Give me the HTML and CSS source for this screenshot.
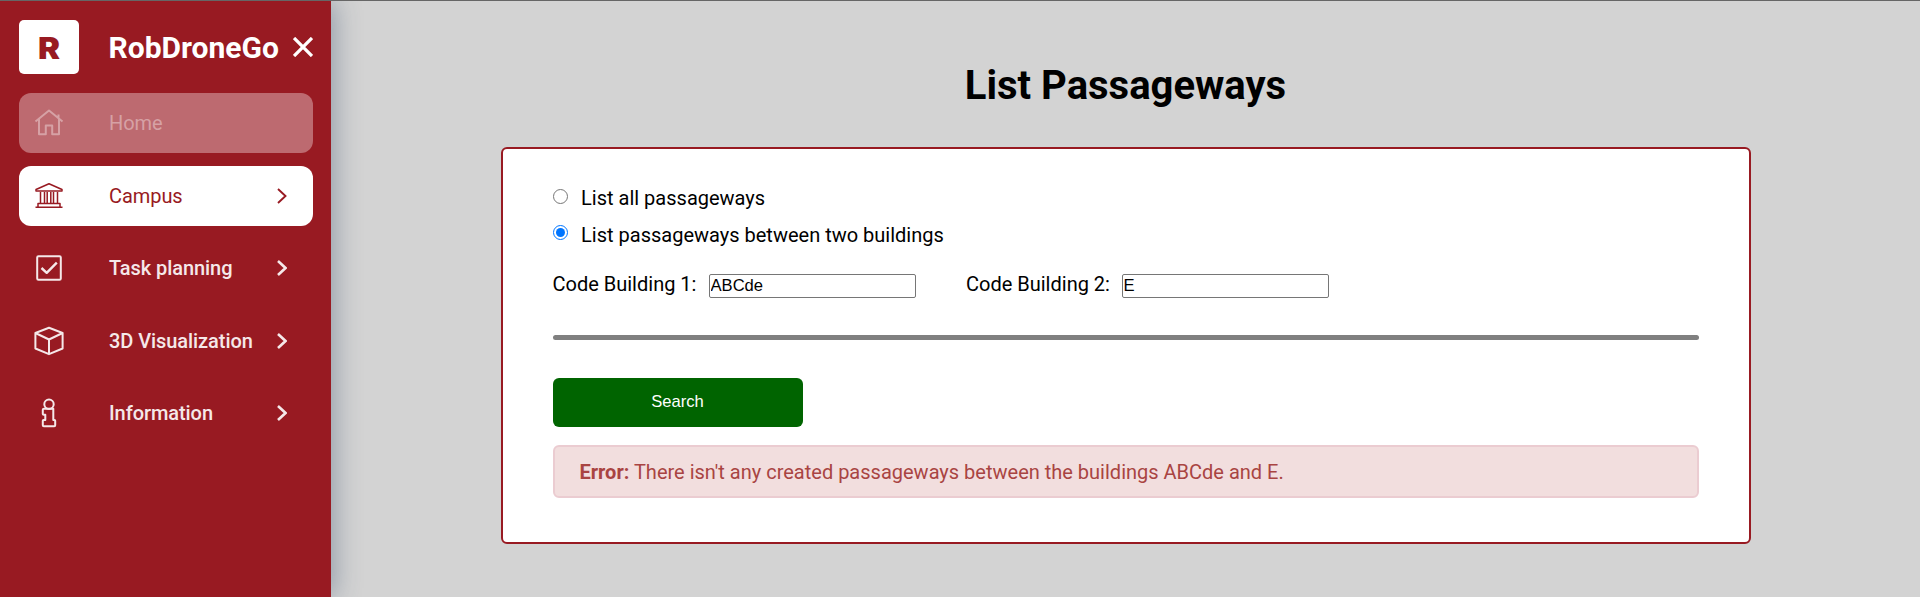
FILE: index.html
```html
<!DOCTYPE html>
<html lang="en">
<head>
<meta charset="utf-8">
<title>RobDroneGo</title>
<link rel="stylesheet" href="styles.css">
</head>
<body>
<div class="app">
  <aside class="sidebar">
    <header class="brand">
      <span class="logo"><span class="logo-letter">R</span></span>
      <span class="brand-name">RobDroneGo</span>
      <svg class="close" viewBox="0 0 20 20"><path d="M1 1 19 19M19 1 1 19"/></svg>
    </header>
    <nav class="menu">
      <a class="item disabled">
        <svg class="icon" viewBox="0 0 30 30"><path d="M1.5 13.5 15 2.5 28.5 13.5M5 11V26.2H11.8V17.5H18.2V26.2H25V11M24.5 10V6.5"/></svg>
        <span class="label">Home</span>
      </a>
      <a class="item active">
        <svg class="icon" viewBox="0 0 30 30"><path d="M15 2.8 28 8.5V10H2V8.5ZM6.5 11V22M10.5 11V22M13.2 11V22M16.8 11V22M19.5 11V22M23.5 11V22M4 25.5V22.5H26V25.5M1.5 26.2H28.5"/></svg>
        <span class="label">Campus</span>
        <svg class="chevron" viewBox="0 0 10 16"><path d="M1 1 8.5 8 1 15"/></svg>
      </a>
      <a class="item">
        <svg class="icon" viewBox="0 0 30 30"><rect x="3.2" y="3.2" width="23.6" height="23.6" rx="1.3"/><path class="thick" d="M7.5 15 12.7 19.8 22.8 9.7"/></svg>
        <span class="label">Task planning</span>
        <svg class="chevron bold" viewBox="0 0 10 16"><path d="M1 1 8.5 8 1 15"/></svg>
      </a>
      <a class="item">
        <svg class="icon" viewBox="0 0 30 30"><path d="M15 1.8 28.6 7V22.5L15 28.2 1.4 22.5V7ZM1.4 7 15 13.5 28.6 7M15 13.5V28"/></svg>
        <span class="label">3D Visualization</span>
        <svg class="chevron bold" viewBox="0 0 10 16"><path d="M1 1 8.5 8 1 15"/></svg>
      </a>
      <a class="item">
        <svg class="icon" viewBox="0 0 30 30"><circle cx="15" cy="6.2" r="4.7"/><path d="M10 10.7H19.3V22H20.5Q21.2 22 21.2 22.8V27.3Q21.2 28.3 20.2 28.3H9.8Q8.8 28.3 8.8 27.3V22.8Q8.8 22 9.6 22H11.3V16.8H9.7Q8.8 16.8 8.8 16V11.7Q8.8 10.7 10 10.7Z"/></svg>
        <span class="label">Information</span>
        <svg class="chevron bold" viewBox="0 0 10 16"><path d="M1 1 8.5 8 1 15"/></svg>
      </a>
    </nav>
  </aside>
  <main class="content">
    <h1 class="title">List Passageways</h1>
    <section class="card">
      <label class="option"><input class="radio" type="radio" name="mode"><span>List all passageways</span></label>
      <label class="option"><input class="radio" type="radio" name="mode" checked><span>List passageways between two buildings</span></label>
      <div class="fields">
        <label class="field"><span>Code Building 1:</span><input class="text" type="text" value="ABCde"></label>
        <label class="field"><span>Code Building 2:</span><input class="text" type="text" value="E"></label>
      </div>
      <hr class="rule">
      <button class="search" type="button">Search</button>
      <div class="alert"><strong>Error:</strong> There isn't any created passageways between the buildings ABCde and E.</div>
    </section>
  </main>
</div>
</body>
</html>
```
FILE: styles.css
```css
* { box-sizing: border-box; }
body {
  margin: 0;
  font-family: Roboto, sans-serif;
  font-size: 20px;
  line-height: 24px;
  color: #000;
  background: #d3d3d3;
}
.app {
  display: flex;
  height: 597px;
  border-top: 1px solid #666;
  overflow: hidden;
}
.sidebar {
  width: 331px;
  flex: none;
  padding: 19px 18px 0 19px;
  background: #981a22;
  color: #f5e8e9;
  box-shadow: 3px 0 25px rgba(51, 75, 105, .42);
}
.brand {
  display: flex;
  align-items: center;
  height: 54px;
  margin-bottom: 19px;
  color: #fff;
}
.logo {
  display: flex;
  align-items: center;
  justify-content: center;
  width: 60px;
  height: 54px;
  margin-right: 29.5px;
  padding-top: 2px;
  border-radius: 5px;
  background: #fff;
  color: #981a22;
  font: 900 30px Inter, sans-serif;
}
.logo-letter { transform: scaleX(1.1); }
.brand-name {
  width: 184.5px;
  padding-top: 1px;
  font-size: 30px;
  font-weight: 700;
}
.close {
  width: 20px;
  height: 20px;
  flex: none;
  stroke: currentColor;
  stroke-width: 3.3;
}
.menu {
  display: flex;
  flex-direction: column;
  gap: 12.5px;
}
.item {
  display: flex;
  align-items: center;
  height: 60px;
  padding: 0 26px 0 15px;
  border-radius: 12px;
  font-weight: 500;
  letter-spacing: -.07px;
}
.disabled {
  background: #bd6a70;
  color: #d6a1a5;
  font-weight: 400;
}
.active {
  background: #fff;
  color: #981a22;
  font-weight: 400;
}
.icon {
  width: 30px;
  height: 30px;
  flex: none;
  margin-right: 45px;
  fill: none;
  stroke: currentColor;
  stroke-width: 2;
  stroke-linejoin: round;
}
.thick { stroke-width: 2.4; }
.active .icon { stroke-width: 1.5; }
.label { flex: 1; white-space: nowrap; }
.chevron {
  width: 10px;
  height: 16px;
  flex: none;
  fill: none;
  stroke: currentColor;
  stroke-width: 1.9;
}
.bold { stroke-width: 2.6; }
.content {
  display: flex;
  flex: 1;
  flex-direction: column;
  align-items: center;
}
.title {
  margin: 61px 0 38px;
  font-size: 40px;
  line-height: 47px;
  font-weight: 700;
}
.card {
  display: flex;
  flex-direction: column;
  width: 1250px;
  height: 397px;
  padding: 37px 50px 0;
  border: 2px solid #981a22;
  border-radius: 6px;
  background: #fff;
}
.option {
  display: flex;
  align-items: flex-start;
  height: 37px;
}
.radio {
  width: 15px;
  height: 15px;
  margin: 3px 13.6px 0 0;
}
.option + .option .radio { margin-top: 2px; }
.fields {
  display: flex;
  gap: 50px;
  height: 75px;
  padding-top: 12px;
}
.field {
  display: flex;
  height: 26px;
}
.field span { width: 156px; }
.field + .field span { padding-left: .5px; }
.text {
  width: 207px;
  height: 24px;
  margin-top: 2px;
  padding: 1px;
  border: 1px solid #767676;
  border-radius: 2px;
  font: 16.6px "Liberation Sans", Arial, sans-serif;
}
.rule {
  width: 100%;
  height: 5px;
  margin: 0;
  border: 0;
  border-radius: 3px;
  background: #808080;
}
.search {
  width: 250px;
  height: 49px;
  margin: 38px 0 18px;
  padding: 0 0 2px;
  border: 0;
  border-radius: 6px;
  background: #006400;
  color: #fff;
  font: 16.6px "Liberation Sans", Arial, sans-serif;
}
.alert {
  height: 53px;
  padding: 13px 25px;
  border: 2px solid #ebccd1;
  border-radius: 6px;
  background: #f2dede;
  color: #a94442;
}
```
